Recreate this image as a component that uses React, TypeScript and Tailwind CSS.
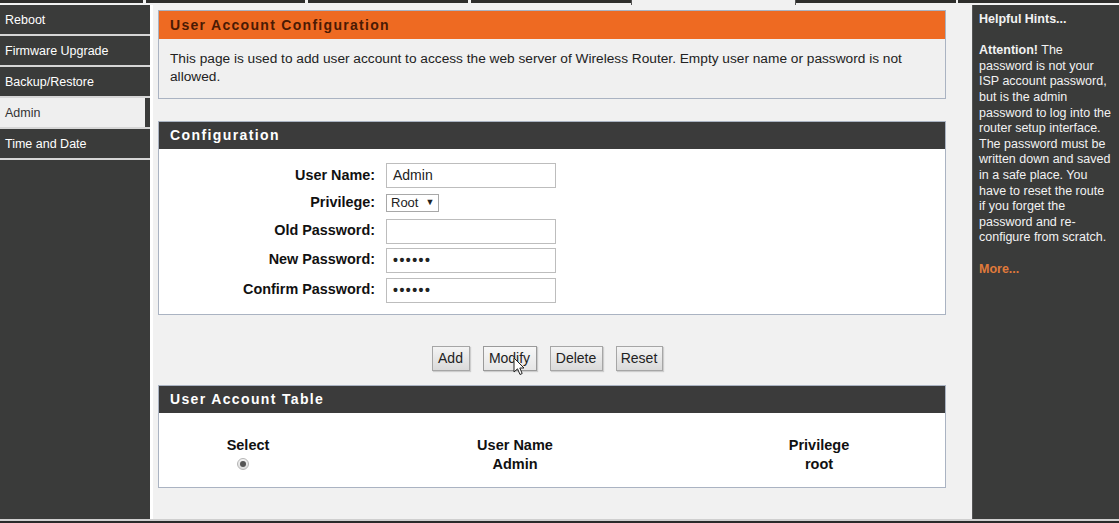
import React from "react";

const tabs = [
  { w: 143, active: false },
  { w: 3, gap: true },
  { w: 159, active: false },
  { w: 3, gap: true },
  { w: 160, active: false },
  { w: 3, gap: true },
  { w: 160, active: false },
  { w: 165, active: true },
  { w: 160, active: false },
  { w: 2, gap: true },
  { w: 161, active: false },
];

const menu = ["Reboot", "Firmware Upgrade", "Backup/Restore", "Admin", "Time and Date"];

function Field({ label, children, mt }: { label: string; children: React.ReactNode; mt: string }) {
  return (
    <div className={`flex items-center ${mt}`}>
      <div className="w-[216px] text-right font-bold text-[14.4px] text-[#111]">{label}</div>
      <div className="ml-[11px]">{children}</div>
    </div>
  );
}

function TextBox({ value, dots }: { value?: string; dots?: boolean }) {
  return (
    <div className="w-[170px] h-[25px] bg-white border border-[#bdbdbd] flex items-center pl-[6px] text-[14px] text-[#222]">
      {dots ? (
        <span className="text-[14px] font-bold tracking-[1.5px] leading-none">••••••</span>
      ) : (
        value
      )}
    </div>
  );
}

function Btn({ label, w, hover }: { label: string; w: string; hover?: boolean }) {
  return (
    <div
      className={`relative ${w} h-[25px] flex items-center justify-center text-[14px] text-[#222] border ${
        hover ? "border-[#9a9a9a] bg-gradient-to-b from-[#f7f7f7] to-[#e6e6e6]" : "border-[#a6a6a6] bg-gradient-to-b from-[#f4f4f4] to-[#dadada]"
      } shadow-[1px_1px_1px_rgba(0,0,0,0.15)]`}
    >
      {label}
      {hover && (
        <svg className="absolute left-[29px] top-[10px]" width="12" height="20" viewBox="0 0 12 20">
          <path d="M1 1 L1 15 L4.5 11.8 L7 17.5 L9.2 16.5 L6.8 11 L11 11 Z" fill="white" stroke="#222" strokeWidth="1" strokeLinejoin="round" />
        </svg>
      )}
    </div>
  );
}

export default function App() {
  return (
    <div className="w-[1119px] h-[523px] overflow-hidden bg-[#f1f1f1] flex flex-col font-['Liberation_Sans',Arial,sans-serif]">
      {/* top tab strip */}
      <div className="h-[5px] flex shrink-0">
        {tabs.map((t, i) =>
          t.gap ? (
            <div key={i} style={{ width: t.w }} className="h-[3px] bg-[#f4f4f4]" />
          ) : t.active ? (
            <div key={i} style={{ width: t.w }} className="h-[5px] bg-[#f1f1f1] border-x border-[#555]" />
          ) : (
            <div key={i} style={{ width: t.w }} className="h-[3px] bg-[#2e2e2c]" />
          )
        )}
      </div>

      {/* middle */}
      <div className="flex-1 flex min-h-0">
        {/* sidebar */}
        <div className="w-[150px] bg-[#3a3b3a] flex flex-col shrink-0">
          {menu.map((m) => (
            <div key={m} className="border-b-2 border-[#d6d6d6]">
              {m === "Admin" ? (
                <div className="flex h-[29px]">
                  <div className="flex-1 bg-[#efefef] text-[#333] text-[12.5px] pl-[5px] pt-[1px] flex items-center">{m}</div>
                  <div className="w-[5px] bg-[#3a3b3a]" />
                </div>
              ) : (
                <div className="h-[29px] text-white text-[12.5px] pl-[5px] pt-[1px] flex items-center">{m}</div>
              )}
            </div>
          ))}
        </div>
        <div className="w-[3px] bg-white shrink-0" />

        {/* main */}
        <div className="flex-1 pl-[5px] pt-[5px]">
          {/* box 1 */}
          <div className="w-[788px] border border-[#aab3c2] bg-[#f0f0f0]">
            <div className="h-[28px] bg-[#ee6a22] flex items-center pl-[11px] text-[14px] font-bold tracking-[1.3px] text-[#4a1a04]">
              User Account Configuration
            </div>
            <div className="h-[59px] pl-[11px] pt-[11px] text-[13.7px] leading-[18px] text-[#222] whitespace-nowrap">
              This page is used to add user account to access the web server of Wireless Router. Empty user name or password is not
              <br />
              allowed.
            </div>
          </div>

          {/* box 2 */}
          <div className="w-[788px] mt-[22px] border border-[#aab3c2] bg-white">
            <div className="h-[27px] bg-[#3b3b3b] flex items-center pl-[11px] text-[14px] font-bold tracking-[1.4px] text-white">
              Configuration
            </div>
            <div className="pt-[14px] pb-[11px]">
              <Field label="User Name:" mt="">
                <TextBox value="Admin" />
              </Field>
              <Field label="Privilege:" mt="mt-[4px]">
                <div className="w-[53px] h-[18px] border border-[#a8a8a8] bg-white flex items-center pl-[4px] text-[13px] text-[#222]">
                  Root
                  <span className="ml-[7px] text-[9px]">▼</span>
                </div>
              </Field>
              <Field label="Old Password:" mt="mt-[5px]">
                <TextBox value="" />
              </Field>
              <Field label="New Password:" mt="mt-[4px]">
                <TextBox dots />
              </Field>
              <Field label="Confirm Password:" mt="mt-[5px]">
                <TextBox dots />
              </Field>
            </div>
          </div>

          {/* buttons */}
          <div className="w-[788px] flex justify-center pr-[10px] gap-[13px] mt-[31px]">
            <Btn label="Add" w="w-[38px]" />
            <Btn label="Modify" w="w-[54px]" hover />
            <Btn label="Delete" w="w-[53px]" />
            <Btn label="Reset" w="w-[47px]" />
          </div>

          {/* box 3 */}
          <div className="w-[788px] mt-[14px] border border-[#aab3c2] bg-white">
            <div className="h-[27px] bg-[#3b3b3b] flex items-center pl-[11px] text-[14px] font-bold tracking-[1.35px] text-white">
              User Account Table
            </div>
            <div className="h-[74px] pt-[23px] grid grid-cols-[178px_356px_1fr] text-[14.5px] font-bold leading-[19px] text-[#111] text-center">
              <div className="flex flex-col items-center">
                <div>Select</div>
                <div className="h-[19px] flex items-center pr-[10px]">
                  <div className="w-[12px] h-[12px] rounded-full border border-[#b5b5b5] bg-gradient-to-b from-[#f3f3f3] to-[#dcdcdc] flex items-center justify-center">
                    <div className="w-[6px] h-[6px] rounded-full bg-[#555]" />
                  </div>
                </div>
              </div>
              <div>
                <div>User Name</div>
                <div>Admin</div>
              </div>
              <div>
                <div>Privilege</div>
                <div>root</div>
              </div>
            </div>
          </div>
        </div>

        {/* hints */}
        <div className="w-[147px] bg-[#3a3b3a] border-l border-[#555] shrink-0 pl-[6px] pt-[7px] text-[12.5px] leading-[15.6px] text-[#f2f2f2] whitespace-nowrap">
          <div className="font-bold">Helpful Hints...</div>
          <div className="h-[15.6px]" />
          <div>
            <span className="font-bold">Attention!</span> The
            <br />
            password is not your
            <br />
            ISP account password,
            <br />
            but is the admin
            <br />
            password to log into the
            <br />
            router setup interface.
            <br />
            The password must be
            <br />
            written down and saved
            <br />
            in a safe place. You
            <br />
            have to reset the route
            <br />
            if you forget the
            <br />
            password and re-
            <br />
            configure from scratch.
          </div>
          <div className="h-[15.6px]" />
          <div className="font-bold text-[#e07a3a]">More...</div>
        </div>
      </div>

      {/* bottom */}
      <div className="h-[2px] bg-[#cfcfcf] shrink-0" />
      <div className="h-[2px] bg-[#2a2a2a] shrink-0" />
    </div>
  );
}
